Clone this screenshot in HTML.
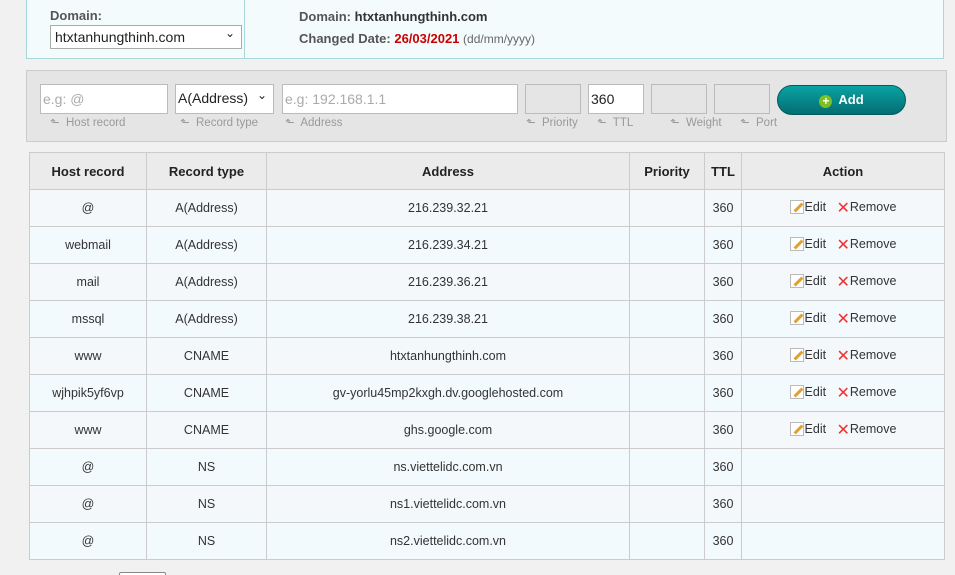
<!DOCTYPE html>
<html><head><meta charset="utf-8"><style>
*{box-sizing:border-box}
html,body{margin:0;width:955px;height:575px;overflow:hidden}
body{background:#f1f1f1;font-family:"Liberation Sans","DejaVu Sans",sans-serif;font-size:12.5px;color:#333;position:relative}
.abs{position:absolute}
.top{left:26px;top:-1px;width:918px;height:60px;background:#f3fbfd;border:1px solid #a8d8da}
.div{left:217px;top:0;width:1px;height:58px;background:#a8d8da}
.lbl{font-weight:bold;color:#555;font-size:13px}
.sel{background:#fff;border:1px solid #aaa;font-size:14px;color:#222}
.form{left:26px;top:70px;width:921px;height:72px;background:#e5e5e5;border:1px solid #ccc}
.in{background:#fff;border:1px solid #bbb;height:30px;top:84px;font-size:14px;padding:6px 2px;color:#aaa}
.in.e{background:#e5e5e5}
.hint{top:115px;font-size:11.5px;color:#999}
.add{left:777px;top:85px;width:129px;height:30px;border-radius:15px;background:linear-gradient(#0aa3a3,#036d72);border:1px solid #045a5e;color:#fff;font-weight:bold;font-size:13px;text-align:center;line-height:28px}
.plus{display:inline-block;width:13px;height:13px;border-radius:7px;background:#7bc122;color:#fff;font-size:12px;line-height:13px;vertical-align:-1px;margin-right:6px}
table{position:absolute;left:29px;top:152px;border-collapse:collapse;width:916px}
td,th{border:1px solid #ccc;text-align:center;height:37px;padding:0;font-size:12.5px;color:#333;line-height:15px}
th{background:#ebebeb;font-weight:bold;color:#222;height:37px;font-size:13px}
tr:nth-child(odd) td{background:#f3fafd}
tr:nth-child(even) td{background:#f4f8fb}
.ed{display:inline-block;width:14px;height:14px;border:1px solid #bbb;background:#fff;position:relative;vertical-align:-3px;margin-right:1px}
.ed:after{content:"";position:absolute;left:2px;top:5px;width:11px;height:3px;background:#e0a030;transform:rotate(-45deg)}
.x{color:#e33;font-weight:bold;font-size:16px;line-height:14px;vertical-align:-2px}
</style></head><body>
<div class="abs top">
 <div class="abs lbl" style="left:23px;top:8px">Domain:</div>
 <div class="abs sel" style="left:23px;top:25px;width:192px;height:24px;padding:3px 4px">htxtanhungthinh.com<span style="position:absolute;right:6px;top:0px;font-size:12px">&#8964;</span></div>
 <div class="abs div"></div>
 <div class="abs lbl" style="left:272px;top:9px">Domain: <span style="color:#333">htxtanhungthinh.com</span></div>
 <div class="abs lbl" style="left:272px;top:31px">Changed Date: <span style="color:#c00">26/03/2021</span> <span style="font-weight:normal;font-size:12px;color:#666">(dd/mm/yyyy)</span></div>
</div>
<div class="abs form"></div>
<div class="abs in" style="left:40px;width:128px">e.g: @</div>
<div class="abs in" style="left:175px;width:99px;color:#222;padding-top:5px">A(Address)<span style="position:absolute;right:6px;top:3px;font-size:12px">&#8964;</span></div>
<div class="abs in" style="left:282px;width:236px">e.g: 192.168.1.1</div>
<div class="abs in e" style="left:525px;width:56px"></div>
<div class="abs in" style="left:588px;width:56px;color:#222">360</div>
<div class="abs in e" style="left:651px;width:56px"></div>
<div class="abs in e" style="left:714px;width:56px"></div>
<div class="abs hint" style="left:50px">&#11025;&nbsp; Host record</div>
<div class="abs hint" style="left:180px">&#11025;&nbsp; Record type</div>
<div class="abs hint" style="left:285px">&#11025;&nbsp; Address</div>
<div class="abs hint" style="left:526px">&#11025;&nbsp; Priority</div>
<div class="abs hint" style="left:597px">&#11025;&nbsp; TTL</div>
<div class="abs hint" style="left:670px">&#11025;&nbsp; Weight</div>
<div class="abs hint" style="left:740px">&#11025;&nbsp; Port</div>
<div class="abs add"><span class="plus">+</span>Add</div>
<table>
<tr><th style="width:117px">Host record</th><th style="width:120px">Record type</th><th style="width:363px">Address</th><th style="width:75px">Priority</th><th style="width:37px">TTL</th><th>Action</th></tr>
<tr><td>@</td><td>A(Address)</td><td>216.239.32.21</td><td></td><td>360</td><td><span class="ed"></span>Edit &nbsp;&nbsp;<span class="x">✕</span>Remove</td></tr>
<tr><td>webmail</td><td>A(Address)</td><td>216.239.34.21</td><td></td><td>360</td><td><span class="ed"></span>Edit &nbsp;&nbsp;<span class="x">✕</span>Remove</td></tr>
<tr><td>mail</td><td>A(Address)</td><td>216.239.36.21</td><td></td><td>360</td><td><span class="ed"></span>Edit &nbsp;&nbsp;<span class="x">✕</span>Remove</td></tr>
<tr><td>mssql</td><td>A(Address)</td><td>216.239.38.21</td><td></td><td>360</td><td><span class="ed"></span>Edit &nbsp;&nbsp;<span class="x">✕</span>Remove</td></tr>
<tr><td>www</td><td>CNAME</td><td>htxtanhungthinh.com</td><td></td><td>360</td><td><span class="ed"></span>Edit &nbsp;&nbsp;<span class="x">✕</span>Remove</td></tr>
<tr><td>wjhpik5yf6vp</td><td>CNAME</td><td>gv-yorlu45mp2kxgh.dv.googlehosted.com</td><td></td><td>360</td><td><span class="ed"></span>Edit &nbsp;&nbsp;<span class="x">✕</span>Remove</td></tr>
<tr><td>www</td><td>CNAME</td><td>ghs.google.com</td><td></td><td>360</td><td><span class="ed"></span>Edit &nbsp;&nbsp;<span class="x">✕</span>Remove</td></tr>
<tr><td>@</td><td>NS</td><td>ns.viettelidc.com.vn</td><td></td><td>360</td><td></td></tr>
<tr><td>@</td><td>NS</td><td>ns1.viettelidc.com.vn</td><td></td><td>360</td><td></td></tr>
<tr><td>@</td><td>NS</td><td>ns2.viettelidc.com.vn</td><td></td><td>360</td><td></td></tr>
</table>
<div class="abs" style="left:119px;top:572px;width:47px;height:10px;border:1px solid #888;border-radius:2px;background:#fff"></div>
</body></html>
